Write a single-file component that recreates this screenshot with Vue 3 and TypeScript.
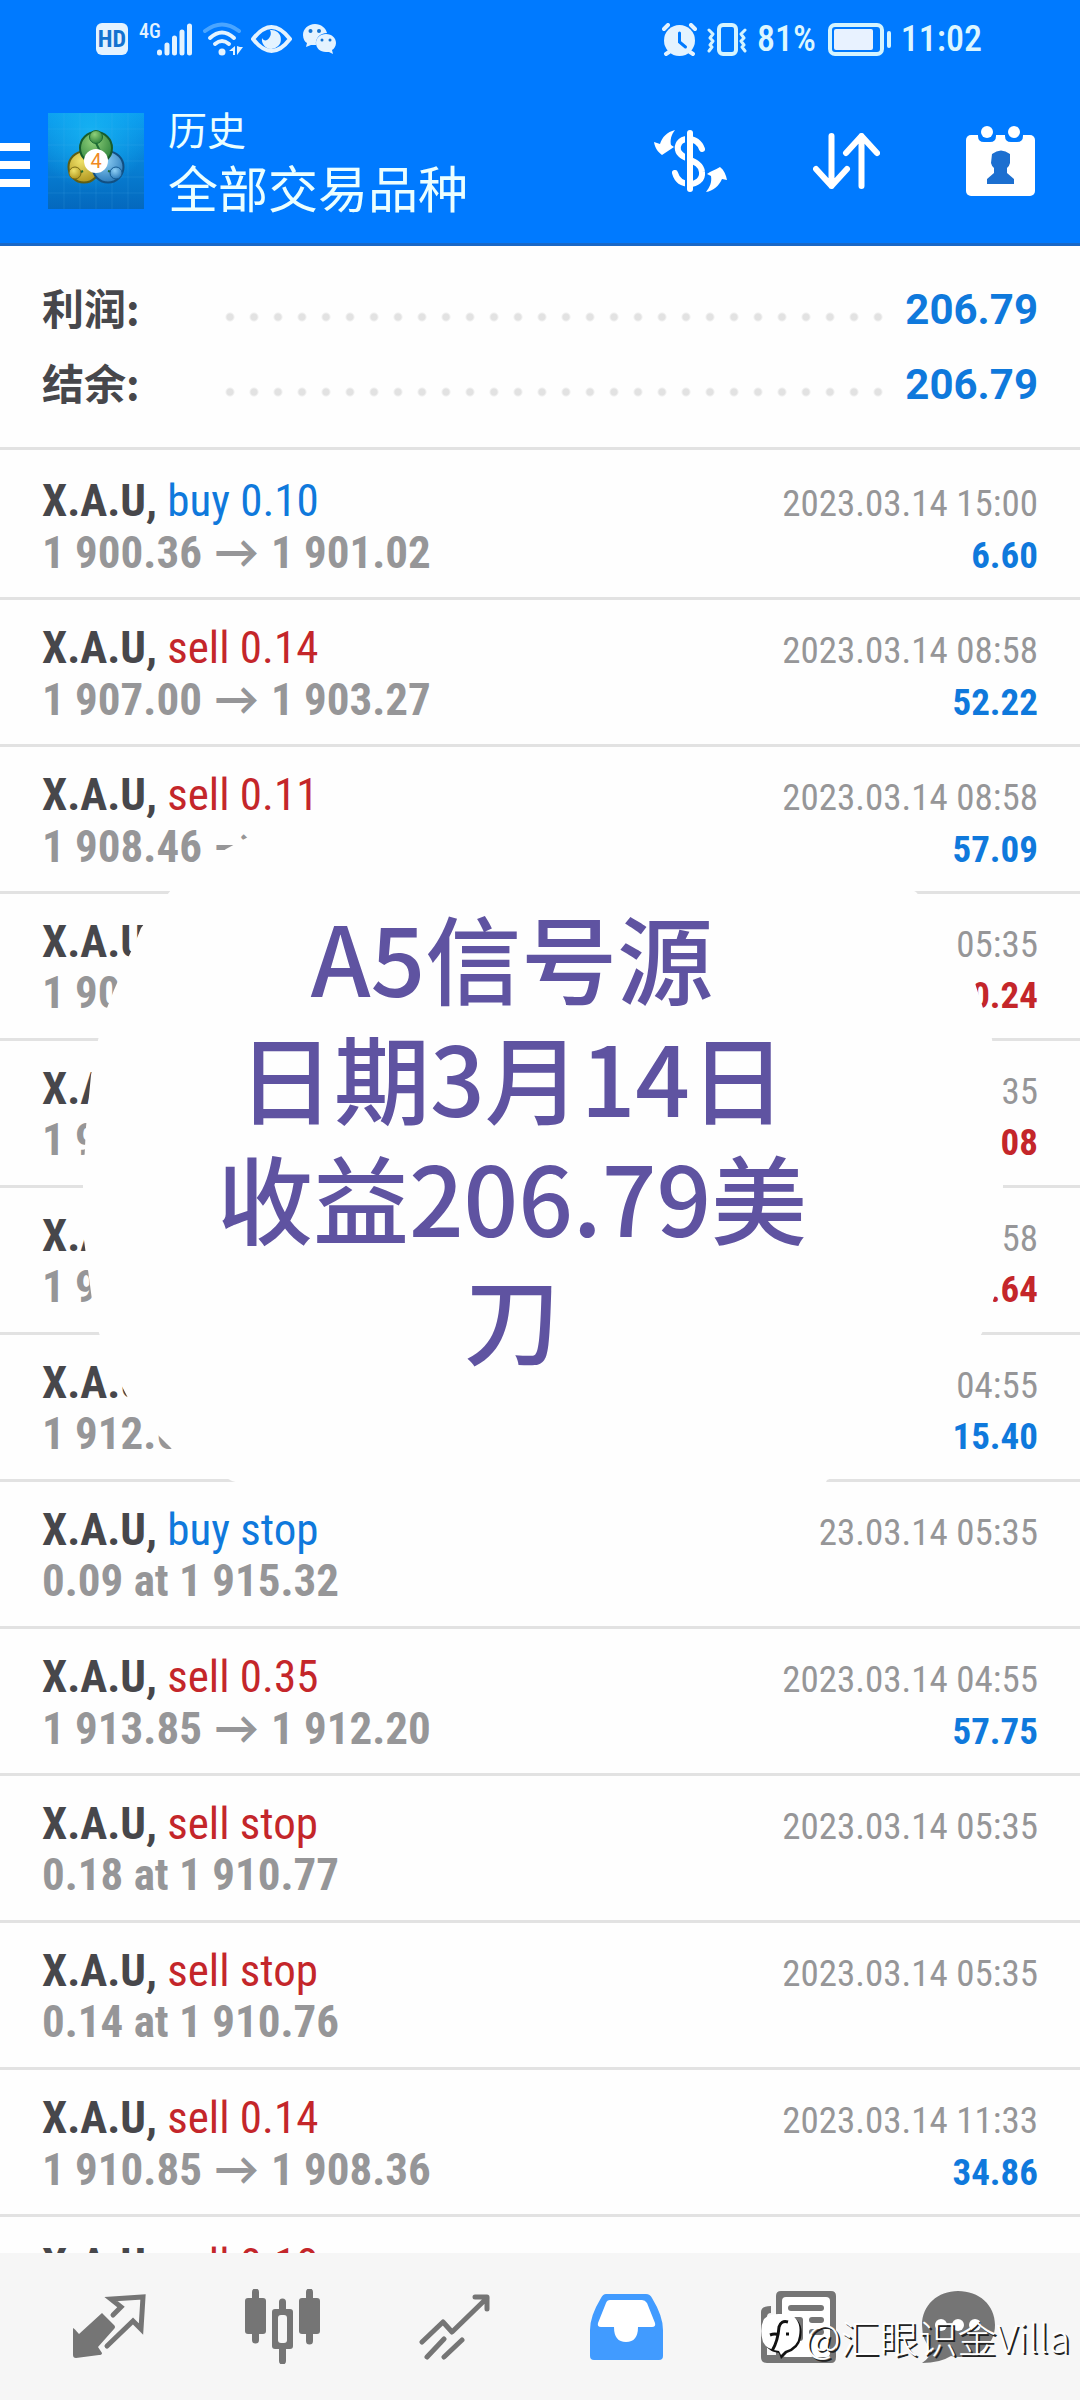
<script setup lang="ts">
interface Deal {
  symbol: string
  side?: 'buy' | 'sell'
  detail?: string
  from: string
  to?: string
  arrow?: boolean
  time: string
  profit?: string
  loss?: boolean
}

const summary = [
  { label: '利润:', value: '206.79' },
  { label: '结余:', value: '206.79' },
]

const deals: Deal[] = [
  { symbol: 'X.A.U,', side: 'buy', detail: '0.10', from: '1 900.36', arrow: true, to: '1 901.02', time: '2023.03.14 15:00', profit: '6.60' },
  { symbol: 'X.A.U,', side: 'sell', detail: '0.14', from: '1 907.00', arrow: true, to: '1 903.27', time: '2023.03.14 08:58', profit: '52.22' },
  { symbol: 'X.A.U,', side: 'sell', detail: '0.11', from: '1 908.46', arrow: true, time: '2023.03.14 08:58', profit: '57.09' },
  { symbol: 'X.A.U', from: '1 90', time: '05:35', profit: '0.24', loss: true },
  { symbol: 'X.A', from: '1 9', time: '35', profit: '08', loss: true },
  { symbol: 'X.A', from: '1 9', time: '58', profit: '.64', loss: true },
  { symbol: 'X.A.U', from: '1 912.6', time: '04:55', profit: '15.40' },
  { symbol: 'X.A.U,', side: 'buy', detail: 'stop', from: '0.09 at 1 915.32', time: '23.03.14 05:35' },
  { symbol: 'X.A.U,', side: 'sell', detail: '0.35', from: '1 913.85', arrow: true, to: '1 912.20', time: '2023.03.14 04:55', profit: '57.75' },
  { symbol: 'X.A.U,', side: 'sell', detail: 'stop', from: '0.18 at 1 910.77', time: '2023.03.14 05:35' },
  { symbol: 'X.A.U,', side: 'sell', detail: 'stop', from: '0.14 at 1 910.76', time: '2023.03.14 05:35' },
  { symbol: 'X.A.U,', side: 'sell', detail: '0.14', from: '1 910.85', arrow: true, to: '1 908.36', time: '2023.03.14 11:33', profit: '34.86' },
  { symbol: 'X.A.U,', side: 'sell', detail: '0.18', from: '', time: '2023.03.14 12:08' },
]

const note = ['A5信号源', '日期3月14日', '收益206.79美', '刀']
</script>

<template>
  <div class="app">
    <header class="top">
      <div class="status">
        <div class="status-group">
          <span class="hd">HD</span>
          <span class="cell">
            <span class="net">4G</span>
            <svg width="35" height="33" viewBox="0 0 35 33" stroke="#e4f3ff" stroke-width="5" stroke-linecap="round">
              <path d="M2.500 29v1M10 22v8M17.500 15v15M25 9v21M32.500 3v27" />
            </svg>
          </span>
          <svg class="wifi" width="41" height="34" viewBox="0 0 41 34" fill="none" stroke="#e4f3ff" stroke-width="4" stroke-linecap="round">
            <path d="M2 9Q19 -4 36 9" stroke="#4aa5ff" />
            <path d="M7 16Q19 5 31 16M12 22Q19 16 26 22" />
            <circle cx="19" cy="30" r="3.500" fill="#e4f3ff" stroke="none" />
            <path d="M26 29l6-5v9h-2v-4zM34 24v9l6-8h-3z" fill="#e4f3ff" stroke="none" />
          </svg>
          <svg class="eye" width="41" height="28" viewBox="0 0 41 28" fill="none">
            <path d="M2 14Q20.500 -10 39 14Q20.500 38 2 14z" stroke="#e4f3ff" stroke-width="4" stroke-linejoin="round" />
            <path d="M19 5a9.500 9.500 0 1 1-8 8c1 2 3 3 5 2c3-2 5-6 3-10z" fill="#e4f3ff" />
          </svg>
          <svg width="33" height="30" viewBox="0 0 33 30">
            <path d="M12 0C5 0 0 5 0 11c0 4 2 7 4 8l-1 4 5-2h5c-1-7 4-12 11-12C23 4 18 0 12 0z" fill="#e4f3ff" />
            <path d="M23 10c-6 0-10 4-10 9s4 9 10 9h3l4 2-1-4c2-1 4-4 4-7 0-5-4-9-10-9z" fill="#e4f3ff" />
            <g fill="#1473d0"><circle cx="7.500" cy="7" r="2" /><circle cx="16" cy="7" r="2" /><circle cx="19" cy="16" r="1.500" /><circle cx="27" cy="16" r="1.500" /></g>
          </svg>
        </div>
        <div class="status-group right">
          <svg class="alarm" width="35" height="33" viewBox="0 0 35 33" fill="none" stroke="#e4f3ff" stroke-width="4" stroke-linecap="round">
            <circle cx="17.500" cy="17.500" r="15.500" fill="#e4f3ff" stroke="none" />
            <path d="M2 6l4-4M33 6l-4-4" />
            <path d="M7 29l-3 2M28 29l3 2" />
            <path d="M17.500 10v9l6 5" stroke="#007aff" stroke-width="3" />
          </svg>
          <svg width="40" height="33" viewBox="0 0 40 33" fill="none" stroke="#d4f4ff" stroke-linecap="round" stroke-linejoin="round">
            <rect x="12" y="2" width="17" height="29" rx="4" stroke-width="4" />
            <path d="M2 7l4 4-3 4 3 3-3 4 2 2-3 4M38 7l-4 4 3 4-3 3 3 4-2 2 3 4" stroke-width="3" />
          </svg>
          <span class="digits">81%</span>
          <svg class="battery" width="63" height="33" viewBox="0 0 63 33">
            <rect x="2" y="2" width="52" height="29" rx="5" fill="none" stroke="#d4f4ff" stroke-width="4" />
            <rect x="6" y="6" width="39" height="21" rx="2" fill="#e8f2ff" />
            <rect x="59" y="8" width="4" height="17" rx="2" fill="#d4f4ff" />
          </svg>
          <time class="digits clock">11:02</time>
        </div>
      </div>

      <div class="bar">
        <button class="icon-btn menu" aria-label="菜单">
          <svg width="30" height="44" viewBox="0 0 30 44" fill="#fff"><path d="M0 0h30v8H0zM0 18h30v8H0zM0 36h30v8H0z" /></svg>
        </button>
        <svg class="logo" width="96" height="96" viewBox="0 0 96 96">
          <defs>
            <linearGradient id="sky" x1="0" y1="0" x2="0" y2="1"><stop offset="0" stop-color="#0b9df0" /><stop offset="1" stop-color="#0468bd" /></linearGradient>
            <radialGradient id="glow" cx=".45" cy=".2" r=".6"><stop offset="0" stop-color="#18b8f4" stop-opacity=".8" /><stop offset="1" stop-color="#18b8f4" stop-opacity="0" /></radialGradient>
            <radialGradient id="green" cx=".4" cy=".3" r=".8"><stop offset="0" stop-color="#8fd07a" /><stop offset="1" stop-color="#237a34" /></radialGradient>
            <radialGradient id="yellow" cx=".4" cy=".3" r=".8"><stop offset="0" stop-color="#efe26a" /><stop offset="1" stop-color="#a98d16" /></radialGradient>
            <radialGradient id="blue" cx=".4" cy=".3" r=".8"><stop offset="0" stop-color="#8fd0f6" /><stop offset="1" stop-color="#1f70b3" /></radialGradient>
          </defs>
          <rect width="96" height="96" fill="url(#sky)" />
          <rect width="96" height="96" fill="url(#glow)" />
          <path d="M16 0v96M32 0v96M48 0v96M64 0v96M80 0v96M0 16h96M0 32h96M0 48h96M0 64h96M0 80h96" stroke="#5cc4f5" stroke-opacity=".15" />
          <circle cx="36" cy="54" r="15.500" fill="url(#yellow)" stroke="#5f5e14" stroke-width="2" />
          <circle cx="60" cy="54" r="15.500" fill="url(#blue)" stroke="#124f82" stroke-width="2" />
          <circle cx="48" cy="35" r="16" fill="url(#green)" stroke="#175c2c" stroke-width="2" />
          <path d="M48 30l6 12-3 1M35 58l-6 3M60 58l8 2" fill="none" stroke="#1d6b35" stroke-width="2" />
          <circle cx="48" cy="24" r="6.500" fill="url(#green)" stroke="#1b6a33" />
          <circle cx="27" cy="60" r="6" fill="url(#yellow)" stroke="#7a6b14" />
          <circle cx="68" cy="60" r="6" fill="url(#blue)" stroke="#155a92" />
          <circle cx="48" cy="48" r="12" fill="#fff" />
          <text x="48" y="55" text-anchor="middle" font-family="Roboto, sans-serif" font-size="20" fill="#f08a24">4</text>
        </svg>
        <div class="titles">
          <p class="crumb">历史</p>
          <h1>全部交易品种</h1>
        </div>
        <div class="actions">
          <button class="icon-btn" aria-label="货币">
            <svg width="73" height="62" viewBox="0 0 73 62" fill="none" stroke="#fff">
              <path d="M48 19C45 11 39 9 34 9C25 9 23 16 24 20C26 30 47 29 48 42C49 50 42 54 36 54C28 54 23 50 21 43" stroke-width="6" stroke-linecap="round" />
              <path d="M33 2v60" stroke="#007aff" stroke-width="4" />
              <path d="M36 3v56" stroke-width="6" stroke-linecap="round" />
              <path d="M21 0c-4 5-5 10-4 15l3 2-12 8c-4-3-7-7-8-13l6 2C8 7 13 2 21 0z" fill="#fff" stroke="none" />
              <path d="M52 62c4-5 6-10 5-16l-4-2c4-3 8-4 13-7 4 3 6 8 7 13l-5-1c-3 7-9 12-16 13z" fill="#fff" stroke="none" />
            </svg>
          </button>
          <button class="icon-btn" aria-label="排序">
            <svg width="67" height="56" viewBox="0 0 67 56" fill="none" stroke="#fff" stroke-width="6" stroke-linecap="round" stroke-linejoin="round">
              <path d="M18.500 3v50M3 36l15.500 17L34 36M48.500 53V3M33 20L48.500 3L64 20" />
            </svg>
          </button>
          <button class="icon-btn" aria-label="日期">
            <svg width="69" height="70" viewBox="0 0 69 70">
              <rect y="9" width="69" height="61" rx="5" fill="#fff" />
              <path d="M12 8v2q0 6 6 6h6q6 0 6-6V8zM39 8v2q0 6 6 6h6q6 0 6-6V8z" fill="#007aff" />
              <circle cx="21" cy="6" r="6" fill="#fff" /><circle cx="48" cy="6" r="6" fill="#fff" />
              <path d="M26 28q9-7 18 0v9q-1 4-3 5v5l7 6v5H21v-5l7-6v-5q-2-1-3-5z" fill="#1c6fd0" />
            </svg>
          </button>
        </div>
      </div>
    </header>

    <main class="content">
      <dl class="summary">
        <div v-for="s in summary" :key="s.label" class="sum-row">
          <dt>{{ s.label }}</dt>
          <dd><span class="dots"></span>{{ s.value }}</dd>
        </div>
      </dl>

      <section class="history">
        <ul>
          <li v-for="(d, i) in deals" :key="i">
            <div class="line">
              <span class="name"><b>{{ d.symbol }}</b> <span v-if="d.side" :class="d.side">{{ d.side }} {{ d.detail }}</span></span>
              <time>{{ d.time }}</time>
            </div>
            <div class="line">
              <span class="price"><span>{{ d.from }}</span><span v-if="d.arrow" class="arrow">→</span><span v-if="d.to">{{ d.to }}</span></span>
              <b v-if="d.profit" class="profit" :class="{ loss: d.loss }">{{ d.profit }}</b>
            </div>
          </li>
        </ul>

        <div class="note">
          <svg class="patch" viewBox="0 0 1080 1200" preserveAspectRatio="none" aria-hidden="true">
            <path d="M320 365L272 374L250 386L226 399L171 440L141 478L135 493L128 508L114 540L107 558L98 590L91 625L86 677L83 736L84 790L88 820L92 850L99 883L112 917L128 948L155 982L172 999L232 1031L325 1057L420 1125L560 1150L700 1130L806 1090L812 1062L827 1030L900 1000L946 955L956 925L968 905L982 883L1000 830L1003 736L1000 670L992 589L983 558L974 530L950 507L940 470L916 442L870 418L788 380L600 365z" fill="#fefefe" />
          </svg>
          <p><span v-for="n in note" :key="n">{{ n }}</span></p>
        </div>
      </section>
    </main>

    <nav class="tabs">
      <a href="#quotes" aria-label="行情">
        <svg width="74" height="66" viewBox="0 0 74 66">
          <path d="M29 19l12 12q2 2 0 4L25 53l4 6q0 2-3 2L3 64q-3 0-3-3V34q1 0 6 6z" fill="#757575" />
          <path d="M40 21l8-8-10-8L70 3l-2 32-8-8-26 25" fill="none" stroke="#757575" stroke-width="5" stroke-linecap="round" />
        </svg>
      </a>
      <a href="#charts" aria-label="图表">
        <svg width="75" height="75" viewBox="0 0 75 75">
          <path d="M10.500 3v48M37.500 13v59M64.500 3v49" stroke="#757575" stroke-width="7" stroke-linecap="round" />
          <g fill="#757575"><rect y="9" width="21" height="36" rx="3" /><rect x="27" y="20" width="21" height="40" rx="3" /><rect x="54" y="9" width="21" height="36" rx="3" /></g>
          <rect x="33" y="26" width="9" height="28" rx="3" fill="#f6f6f6" />
        </svg>
      </a>
      <a href="#trade" aria-label="交易">
        <svg width="71" height="66" viewBox="0 0 71 66" fill="none" stroke="#757575" stroke-width="5" stroke-linecap="round" stroke-linejoin="round">
          <path d="M3 48l21-20 9 10L68 4M56 3h12v12M8 63l17-18M25 63l18-17" />
        </svg>
      </a>
      <a href="#history" aria-label="历史" aria-current="page">
        <svg width="73" height="66" viewBox="0 0 73 66">
          <path d="M16 0h40q4 0 6 4 11 18 11 32v26q0 4-4 4H4q-4 0-4-4V36Q0 22 11 4q2-4 5-4z" fill="#419bff" />
          <path d="M20 6h32q3 0 5 3l8 20q1 4-3 4H48q0 15-12 15T24 33H11q-4 0-3-4l8-20q1-3 4-3z" fill="#fff" />
        </svg>
      </a>
      <a href="#news" aria-label="新闻">
        <svg width="75" height="72" viewBox="0 0 75 72">
          <path d="M20 0h50q5 0 5 5v61q0 6-5 6H6q-6 0-6-6V21q0-6 10-6v7q-4 0-4 4v38h9V5q0-5 5-5z" fill="#757575" />
          <rect x="21" y="6" width="48" height="60" rx="4" fill="#fff" />
          <g fill="#757575"><rect x="27" y="14" width="36" height="6" rx="3" /><rect x="27" y="26" width="15" height="24" rx="3" /><rect x="48" y="26" width="15" height="6" rx="3" /><rect x="48" y="38" width="15" height="6" rx="3" /></g>
        </svg>
      </a>
      <a href="#chat" aria-label="消息">
        <svg width="73" height="72" viewBox="0 0 73 72">
          <path d="M36 0C57 0 73 14 73 34S57 66 38 66q-6 0-9-1-11 7-29 7 8-5 10-13Q0 50 0 34C0 14 16 0 36 0z" fill="#757575" />
          <g fill="#fff"><circle cx="19" cy="34" r="6" /><circle cx="36" cy="34" r="6" /><circle cx="53" cy="34" r="6" /></g>
        </svg>
      </a>
      <div class="watermark">
        <svg width="42" height="45" viewBox="0 0 42 45">
          <path d="M5 7Q10 2 20 3Q33 2 37 7Q42 13 40 24Q38 35 26 39L20 45L18 39Q8 38 4 30Q-1 17 5 7z" fill="#111" />
          <path d="M3 5Q8 0 18 0Q31-1 35 5Q40 11 38 22Q37 33 24 37L20 41L18 37Q6 36 2 28Q-2 15 3 5z" fill="#fff" />
          <path d="M27 8Q20 6 18 13Q17 27 11 37M9 21Q14 19 18 21M25 20h3" fill="none" stroke="#111" stroke-width="3" />
        </svg>
        <span>@汇眼识金Villa</span>
      </div>
    </nav>
  </div>
</template>

<style>
body {
  margin: 0;
  background: #fefefe;
}
</style>

<style scoped>
.app {
  display: flex;
  flex-direction: column;
  height: 100vh;
  overflow: hidden;
  background: #fefefe;
  font-family: 'Roboto Condensed', 'Noto Sans CJK SC', sans-serif;
}
svg {
  display: block;
  flex: none;
}
p, h1, dl, dd, ul {
  margin: 0;
  padding: 0;
}
.top {
  flex: none;
  background: #007aff;
  border-bottom: 3px solid #1a68c6;
}
.status {
  display: flex;
  justify-content: space-between;
  align-items: center;
  height: 78px;
  padding: 0 98px 0 96px;
}
.status-group {
  display: flex;
  align-items: center;
  gap: 11px;
}
.status-group.right {
  gap: 10px;
}
.hd {
  width: 32px;
  height: 32px;
  border-radius: 6px;
  background: #e4f3ff;
  color: #1473d0;
  font-size: 24px;
  font-weight: 700;
  line-height: 32px;
  text-align: center;
}
.cell {
  display: flex;
  align-items: flex-start;
}
.net {
  width: 18px;
  color: #e4f3ff;
  font-size: 20px;
  font-weight: 500;
  line-height: 16px;
}
.eye {
  margin-left: -4px;
}
.digits {
  color: #dcf6ff;
  font-size: 36px;
  font-weight: 500;
  line-height: 36px;
}
.battery {
  margin-left: 2px;
}
.bar {
  display: flex;
  align-items: center;
  height: 165px;
  padding-right: 45px;
}
.icon-btn {
  padding: 0;
  border: 0;
  background: none;
}
.menu {
  margin-top: 8px;
}
.logo {
  margin: 0 24px 0 18px;
}
.titles {
  flex: 1;
  padding-bottom: 6px;
  color: #ebffff;
  font-family: 'Noto Sans CJK SC', sans-serif;
}
.crumb {
  font-size: 39px;
  line-height: 56px;
}
h1 {
  font-size: 50px;
  font-weight: 400;
  line-height: 60px;
}
.actions {
  display: flex;
  align-items: center;
  gap: 86px;
}
.content {
  flex: 1;
  min-height: 0;
  overflow: hidden;
}
.summary {
  padding: 26px 42px 25px;
  border-bottom: 3px solid #e2e2e2;
}
.sum-row {
  display: flex;
  align-items: center;
  height: 75px;
}
dt {
  width: 176px;
  padding-bottom: 5px;
  color: #47474b;
  font: 700 42px/70px 'Noto Sans CJK SC', sans-serif;
}
dd {
  display: flex;
  flex: 1;
  align-items: center;
  gap: 17px;
  color: #0f79dc;
  font: 700 42px/75px Roboto, sans-serif;
}
.dots {
  flex: 1;
  height: 10px;
  margin-top: 14px;
  background: radial-gradient(circle, #e2e2e2 3px, transparent 5px) 0 0 / 24px 10px;
}
.history {
  position: relative;
}
ul {
  list-style: none;
}
li {
  height: 122px;
  padding: 22px 42px 0;
  border-bottom: 3px solid #e2e2e2;
}
li:first-child {
  padding-top: 25px;
}
.line {
  display: flex;
  justify-content: space-between;
  align-items: baseline;
  height: 51px;
  font-size: 45px;
  line-height: 51px;
  white-space: pre;
}
.name b {
  color: #47474b;
}
.buy {
  color: #0f79dc;
}
.sell {
  color: #c4262a;
}
.line time {
  color: #969698;
  font-size: 37px;
}
.price {
  display: flex;
  align-items: baseline;
  gap: 12px;
  color: #969698;
  font-weight: 700;
}
.arrow {
  font-family: Lato, sans-serif;
}
.profit {
  color: #0f79dc;
  font-size: 37px;
}
.profit.loss {
  color: #c4262a;
}
.note {
  position: absolute;
  top: 0;
  left: 0;
  width: 100%;
}
.patch {
  width: 100%;
  height: 1200px;
}
.note p {
  position: absolute;
  top: 446px;
  left: 0;
  right: 56px;
  color: #5f53a1;
  font: 500 96px/120px 'Noto Sans CJK SC', sans-serif;
  text-align: center;
}
.note span {
  display: block;
}
.tabs {
  position: relative;
  flex: none;
  display: grid;
  grid-template-columns: repeat(5, 43fr) 37fr;
  align-items: center;
  justify-items: center;
  height: 147px;
  padding: 0 48px 0 24px;
  box-sizing: border-box;
  background: #f6f6f6;
}
.watermark {
  position: absolute;
  top: 58px;
  right: 10px;
  display: flex;
  align-items: center;
  gap: 2px;
  color: #fff;
  font: 300 39px/50px 'Noto Sans CJK SC', sans-serif;
  text-shadow: 2px 2px 0 #222;
}
</style>
